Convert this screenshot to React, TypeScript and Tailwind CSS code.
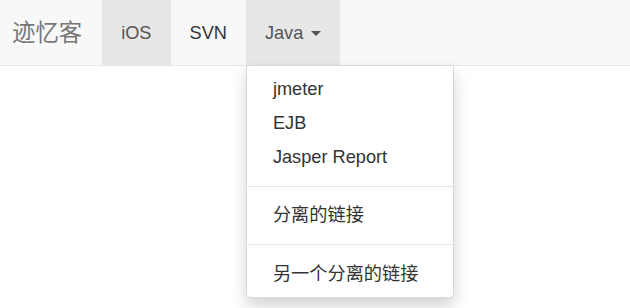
import React from "react";

const items = ["jmeter", "EJB", "Jasper Report"];

function Caret() {
  return (
    <span className="ml-[2.6px] inline-block h-0 w-0 align-middle border-t-[5.2px] border-x-[5.2px] border-x-transparent border-t-[#555]" />
  );
}

function Divider() {
  return <li className="my-[11.7px] h-[1.3px] bg-[#e5e5e5]" />;
}

export default function App() {
  return (
    <div
      className="w-[630px] h-[308px] bg-white overflow-hidden"
      style={{ fontFamily: '"Liberation Sans", "Noto Sans CJK SC", Arial, sans-serif' }}
    >
      <nav className="flex h-[66px] bg-[#f8f8f8] border-b border-[#e7e7e7]">
        <a className="pl-[12px] pr-[20px] py-[19.5px] text-[23.4px] leading-[26px] text-[#777]">
          迹忆客
        </a>
        <ul className="flex text-[18.2px] leading-[26px]">
          <li className="px-[19px] py-[19.5px] bg-[#e7e7e7] text-[#555]">iOS</li>
          <li className="px-[19px] py-[19.5px] text-[#333]">SVN</li>
          <li className="relative px-[19px] py-[19.5px] bg-[#e7e7e7] text-[#555]">
            Java <Caret />
            <ul className="absolute left-0 top-[65px] z-10 w-[208px] py-[6.5px] bg-white border border-[rgba(0,0,0,0.15)] rounded-b-[5px] shadow-[0_8px_16px_rgba(0,0,0,0.175)] text-[#333]">
              {items.map((it) => (
                <li key={it} className="px-[26px] py-[3.9px] whitespace-nowrap">
                  {it}
                </li>
              ))}
              <Divider />
              <li className="px-[26px] py-[3.9px] whitespace-nowrap">分离的链接</li>
              <Divider />
              <li className="px-[26px] py-[3.9px] whitespace-nowrap">另一个分离的链接</li>
            </ul>
          </li>
        </ul>
      </nav>
    </div>
  );
}
